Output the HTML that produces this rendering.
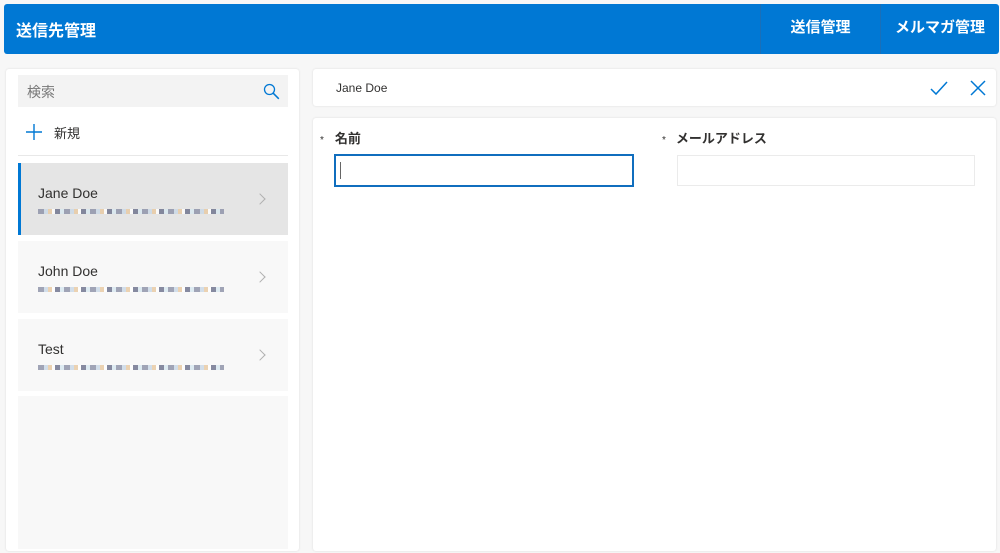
<!DOCTYPE html>
<html><head><meta charset="utf-8"><style>
*{box-sizing:border-box;margin:0;padding:0}
body{width:1000px;height:553px;background:#f7f7f7;font-family:"Liberation Sans","Noto Sans CJK JP",sans-serif;position:relative;overflow:hidden;color:#323130}
.abs{position:absolute}
.hdr{left:4px;top:4px;width:995px;height:50px;background:#0078d4;border-radius:3px;color:#fff;font-weight:bold}
.hdr .t{position:absolute;left:12px;top:13px;font-size:16px}
.nav{position:absolute;top:0;height:50px;border-left:1px solid #1a6fb8;font-size:15px;line-height:48px;text-align:center}
.card{background:#fff;border-radius:3px;box-shadow:0 0 2px rgba(0,0,0,.12)}
.item{position:absolute;left:18px;width:270px;height:72px;background:#f8f8f8}
.item .n{position:absolute;left:20px;top:22px;font-size:14px}
.item .e{position:absolute;left:20px;top:46px;width:186px;height:5px;background:repeating-linear-gradient(90deg,#8a8fa6 0 6px,#c9d8e6 6px 10px,#e8c9a0 10px 14px,#fff 14px 17px,#6a6f8a 17px 22px,#d8e8f0 22px 26px);opacity:.8}
.chev{position:absolute;right:24px;top:32px;width:8px;height:8px;border-right:1.2px solid #b0b0b0;border-top:1.2px solid #b0b0b0;transform:rotate(45deg)}
.lbl{font-size:13px;font-weight:bold;top:128px}
</style></head><body>
<div class="abs hdr"><div class="t">送信先管理</div>
<div class="nav" style="left:756px;width:120px">送信管理</div>
<div class="nav" style="left:876px;width:119px">メルマガ管理</div></div>

<div class="abs card" style="left:6px;top:69px;width:293px;height:482px"></div>
<div class="abs" style="left:18px;top:75px;width:270px;height:32px;background:#f3f3f3"></div>
<div class="abs" style="left:27px;top:82px;font-size:14px;color:#777">検索</div>
<svg class="abs" style="left:263px;top:83px" width="17" height="17"><circle cx="6.5" cy="6.5" r="5" fill="none" stroke="#0078d4" stroke-width="1.3"/><path d="M10.3 10.3l5.5 5.5" stroke="#0078d4" stroke-width="1.5"/></svg>
<svg class="abs" style="left:26px;top:124px" width="16" height="16"><path d="M8 0v16M0 8h16" stroke="#0078d4" stroke-width="1.4"/></svg>
<div class="abs" style="left:54px;top:123px;font-size:13px">新規</div>
<div class="abs" style="left:18px;top:155px;width:270px;height:1px;background:#e8e8e8"></div>

<div class="item" style="top:163px;background:#e5e5e5;border-left:3px solid #0078d4"><div class="n" style="left:17px">Jane Doe</div><div class="e" style="left:17px"></div><div class="chev"></div></div>
<div class="item" style="top:241px"><div class="n">John Doe</div><div class="e"></div><div class="chev"></div></div>
<div class="item" style="top:319px"><div class="n">Test</div><div class="e"></div><div class="chev"></div></div>
<div class="item" style="top:396px;height:153px"></div>

<div class="abs card" style="left:313px;top:69px;width:683px;height:37px"></div>
<div class="abs" style="left:336px;top:81px;font-size:12px">Jane Doe</div>
<svg class="abs" style="left:930px;top:80px" width="18" height="16"><path d="M1 9l5 5L17 2" fill="none" stroke="#0078d4" stroke-width="1.5"/></svg>
<svg class="abs" style="left:970px;top:80px" width="16" height="16"><path d="M1 1l14 14M15 1L1 15" stroke="#0078d4" stroke-width="1.5"/></svg>

<div class="abs card" style="left:313px;top:118px;width:683px;height:433px"></div>
<div class="abs lbl" style="left:320px"><span style="font-weight:normal;font-size:10px;margin-right:11px">*</span>名前</div>
<div class="abs lbl" style="left:662px"><span style="font-weight:normal;font-size:10px;margin-right:10px">*</span>メールアドレス</div>
<div class="abs" style="left:334px;top:154px;width:300px;height:33px;border:2px solid #106ebe"></div>
<div class="abs" style="left:340px;top:162px;width:1px;height:17px;background:#666"></div>
<div class="abs" style="left:677px;top:155px;width:298px;height:31px;border:1px solid #ebebeb"></div>
</body></html>
